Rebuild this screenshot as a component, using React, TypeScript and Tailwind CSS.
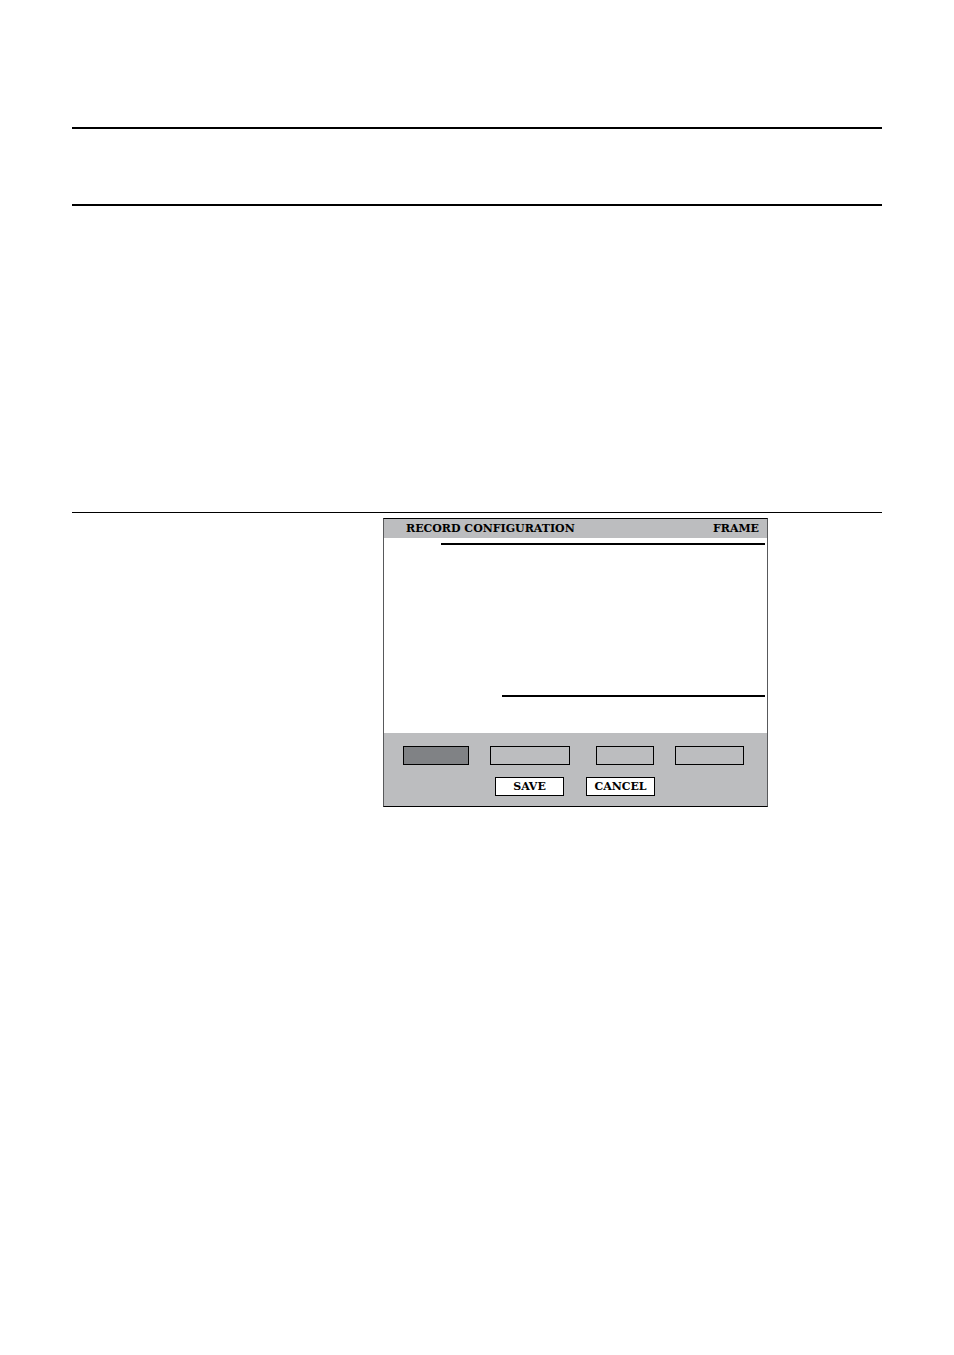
const softKeys = [
    { id: 1, className: "w-[66px] bg-[#808285]" },
    { id: 2, className: "w-20 ml-[21px]" },
    { id: 3, className: "w-[58px] ml-[26px]" },
    { id: 4, className: "w-[69px] ml-[21px]" },
];

function RecordConfiguration() {
    return (
<section className="mt-[5px] ml-[311px] w-[385px] border-x border-x-[#58595b] border-y border-y-black">
    <header className="flex justify-between items-center h-[19px] pl-[22px] pr-2 bg-[#bcbdbf]">
        <h1>RECORD CONFIGURATION</h1>
        <span>FRAME</span>
    </header>
    <div className="flex flex-col justify-between h-[195px] pt-[5px] pr-[2px] pb-9">
        <hr className="ml-[57px] border-t-2 border-black" />
        <hr className="ml-[118px] border-t-2 border-black" />
    </div>
    <footer className="h-[73px] pt-[13px] bg-[#bcbdbf]">
        <div className="flex pl-[19px]">
            {softKeys.map((key) => (
                <button key={key.id} type="button" aria-label={`Option ${key.id}`} className={`h-[19px] border border-black ${key.className}`} />
            ))}
        </div>
        <div className="flex gap-[22px] mt-3 pl-[111px]">
            <button type="button" className="w-[69px] h-[19px] border border-black bg-white">SAVE</button>
            <button type="button" className="w-[69px] h-[19px] border border-black bg-white">CANCEL</button>
        </div>
    </footer>
</section>
    );
}

export default function App() {
    return (
<main className="min-h-screen px-[72px] pt-[127px] bg-white text-black text-[11px] leading-4 font-bold font-['DejaVu_Serif',serif]">
    <div className="h-[79px] border-y-2 border-black"></div>
    <hr className="mt-[306px] border-t border-black" />
    <RecordConfiguration />
</main>
    );
}
